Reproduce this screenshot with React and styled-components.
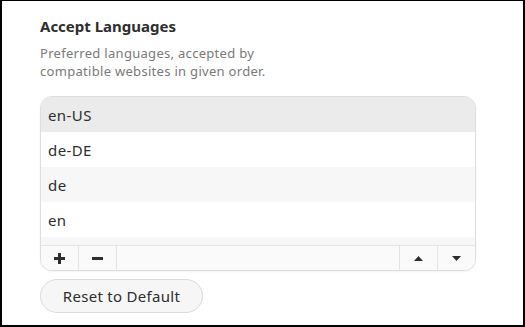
import React from 'react'
import styled, { createGlobalStyle } from 'styled-components'

const GlobalStyle = createGlobalStyle`
    html, body {
        margin: 0;
        padding: 0;
        background: #ffffff;
    }
    body {
        font-family: "Noto Sans", "DejaVu Sans", sans-serif;
        color: #2e2e2e;
    }
`

const languages = ['en-US', 'de-DE', 'de', 'en', '']

function App() {
    return (
        <>
            <GlobalStyle />
            <Frame>
                <Title>Accept Languages</Title>
                <Description>
                    Preferred languages, accepted by<br />
                    compatible websites in given order.
                </Description>
                <ListBox>
                    <Rows>
                        {languages.map((lang, i) => (
                            <Row key={i} $selected={i === 0} $odd={i % 2 === 0}>
                                {lang}
                            </Row>
                        ))}
                    </Rows>
                    <Toolbar>
                        <ToolButton>
                            <svg width="11" height="11" viewBox="0 0 11 11">
                                <rect x="4" y="0" width="3" height="11" fill="#2e2e2e" />
                                <rect x="0" y="4" width="11" height="3" fill="#2e2e2e" />
                            </svg>
                        </ToolButton>
                        <ToolButton>
                            <svg width="11" height="11" viewBox="0 0 11 11">
                                <rect x="0" y="4" width="11" height="3" fill="#2e2e2e" />
                            </svg>
                        </ToolButton>
                        <Spacer />
                        <ToolButton>
                            <svg width="9" height="5" viewBox="0 0 9 5">
                                <path d="M4.5 0 L9 5 L0 5 Z" fill="#2e2e2e" />
                            </svg>
                        </ToolButton>
                        <ToolButton $last>
                            <svg width="9" height="5" viewBox="0 0 9 5">
                                <path d="M0 0 L9 0 L4.5 5 Z" fill="#2e2e2e" />
                            </svg>
                        </ToolButton>
                    </Toolbar>
                </ListBox>
                <ResetButton>Reset to Default</ResetButton>
            </Frame>
        </>
    )
}

export default App

const Frame = styled.div`
    box-sizing: border-box;
    width: 525px;
    height: 327px;
    border: 2px solid #000;
    border-top-width: 1px;
    padding: 15px 47px 0 38px;
    display: flex;
    flex-direction: column;
    align-items: flex-start;
`

const Title = styled.h2`
    margin: 0;
    font-size: 15px;
    font-weight: 700;
    line-height: 20px;
    color: #2e2e2e;
`

const Description = styled.p`
    margin: 8px 0 0;
    font-size: 13px;
    letter-spacing: 0.3px;
    line-height: 18px;
    color: #7a7a7a;
`

const ListBox = styled.div`
    margin-top: 16px;
    width: 100%;
    box-sizing: border-box;
    border: 1px solid #dedede;
    border-radius: 12px;
    overflow: hidden;
    background: #fff;
    box-shadow: 0 1px 2px rgba(0, 0, 0, 0.05);
    display: flex;
    flex-direction: column;
`

const Rows = styled.div`
    height: 148px;
    overflow: hidden;
    display: flex;
    flex-direction: column;
`

const Row = styled.div`
    flex: none;
    height: 35px;
    display: flex;
    align-items: center;
    padding-left: 7px;
    font-size: 15px;
    letter-spacing: 0.4px;
    color: #2e2e2e;
    background: ${p => p.$selected ? '#ebebeb' : p.$odd ? '#f7f7f7' : '#ffffff'};
`

const Toolbar = styled.div`
    height: 24px;
    border-top: 1px solid #e4e4e4;
    background: #fafafa;
    display: flex;
`

const ToolButton = styled.div`
    width: 37px;
    display: flex;
    align-items: center;
    justify-content: center;
    border-right: ${p => p.$last ? 'none' : '1px solid #e4e4e4'};
`

const Spacer = styled.div`
    flex: 1;
    border-right: 1px solid #e4e4e4;
`

const ResetButton = styled.button`
    margin-top: 8px;
    height: 34px;
    width: 163px;
    border: 1px solid #dcdcdc;
    border-radius: 17px;
    background: #f6f6f6;
    font-family: "Noto Sans", "DejaVu Sans", sans-serif;
    font-size: 15px;
    letter-spacing: 0.3px;
    color: #2e2e2e;
    padding: 0;
`
